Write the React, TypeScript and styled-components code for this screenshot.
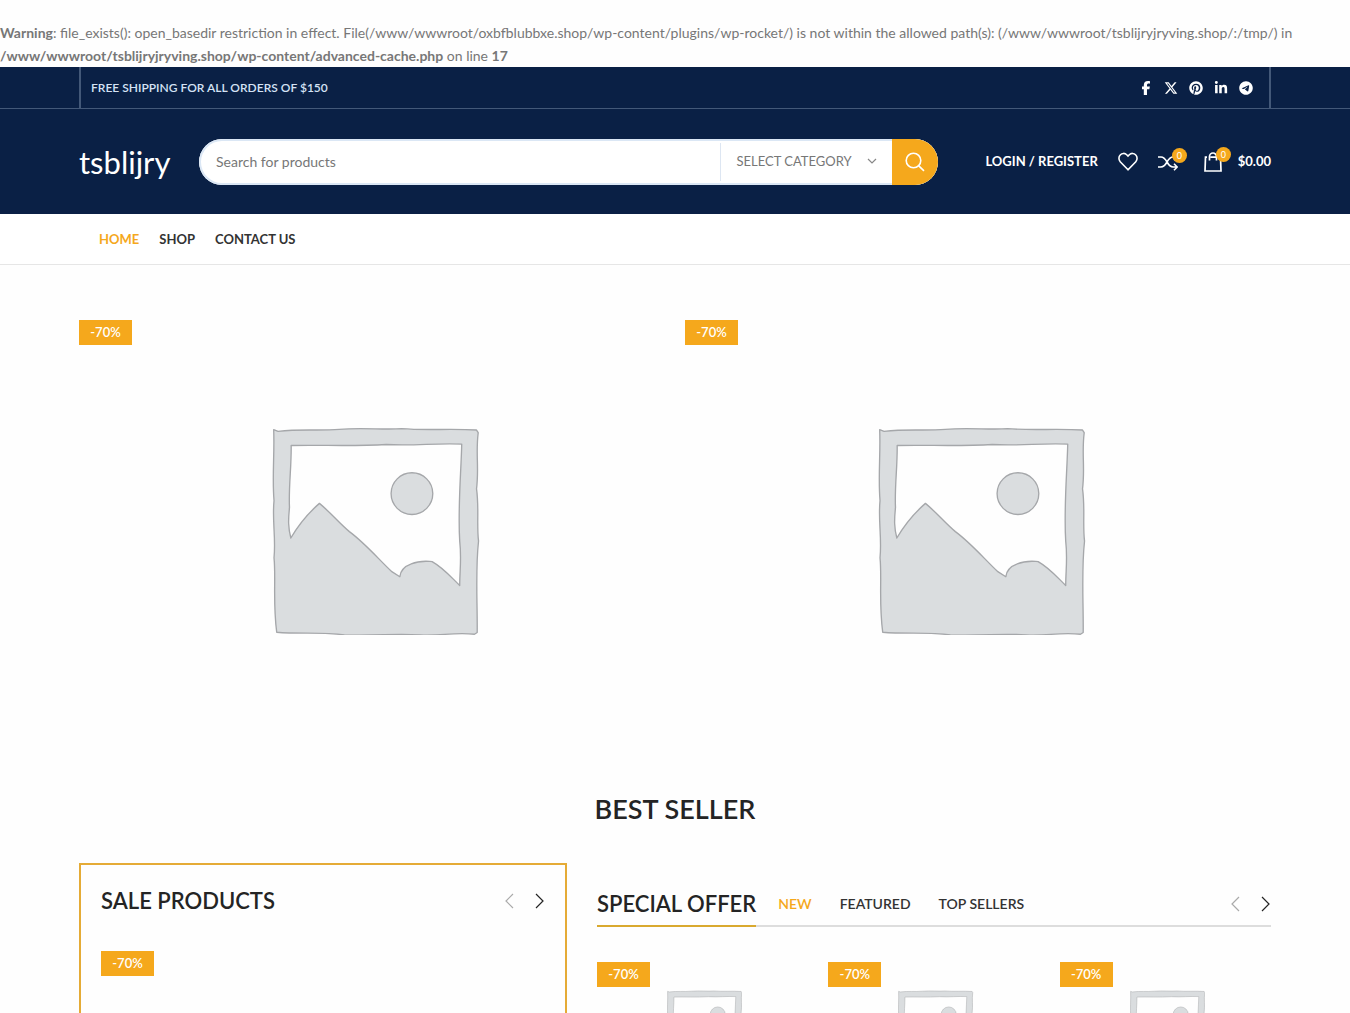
import React from "react";
import styled, { createGlobalStyle } from "styled-components";
import { FaFacebookF, FaLinkedinIn, FaPinterest, FaTelegram, FaXTwitter } from "react-icons/fa6";

const accent = "#f5a81c";
const navy = "#0a2045";
const rule = "#435878";
const ink = "#242424";

const GlobalStyle = createGlobalStyle`
  *, *::before, *::after { box-sizing: border-box; }
  html { scrollbar-width: none; }
  body {
    margin: 0;
    background: #fefefe;
    color: #777;
    font-family: Lato, "Liberation Sans", sans-serif;
    font-size: 14px;
    line-height: 23px;
  }
  a { color: inherit; text-decoration: none; }
  button, input, select { font: inherit; border: 0; margin: 0; }
  h2, h3, p, ul { margin: 0; padding: 0; }
  ul { list-style: none; }
`;

const Container = styled.div`
  max-width: 1222px;
  margin: 0 auto;
  padding: 0 15px;
`;

const Warning = styled.p`
  padding-top: 21px;
  b { font-weight: 700; }
`;

const Header = styled.header`
  background: ${navy};
  color: #fff;
`;

const TopBar = styled.div`
  border-bottom: 1px solid ${rule};
`;

const TopBarInner = styled.div`
  display: flex;
  align-items: center;
  justify-content: space-between;
  height: 41px;
  padding: 0 16px 0 10px;
  border: solid ${rule};
  border-width: 0 2px;
  font-size: 12px;
  font-weight: 600;
  color: #d5e3f5;
`;

const Socials = styled.ul`
  display: flex;
  gap: 11px;
  color: #fff;
  a { display: flex; }
`;

const MainBar = styled.div`
  display: flex;
  align-items: center;
  height: 105px;
`;

const SiteTitle = styled.a`
  width: 120px;
  font-size: 31px;
  line-height: 40px;
`;

const SearchForm = styled.form`
  display: flex;
  flex: 1;
  height: 46px;
  border-radius: 23px;
  overflow: hidden;
  background: #fff;
  box-shadow: inset 0 0 0 2px #dbe7f5;
`;

const SearchInput = styled.input`
  flex: 1;
  min-width: 0;
  padding: 0 17px;
  background: transparent;
  color: #777;
  outline: none;
  &::placeholder { color: #777; opacity: 1; }
`;

const CategoryBox = styled.div`
  display: flex;
  align-items: center;
  width: 172px;
  margin: 4px 0;
  padding-right: 15px;
  border-left: 1px solid #dde6f2;
`;

const CategorySelect = styled.select`
  flex: 1;
  min-width: 0;
  padding: 0 0 0 15px;
  appearance: none;
  background: transparent;
  color: #777;
  font-size: 13px;
  outline: none;
`;

const SearchButton = styled.button`
  display: grid;
  place-items: center;
  width: 46px;
  padding: 0;
  background: ${accent};
  color: #fff;
`;

const Tools = styled.div`
  display: flex;
  align-items: center;
  gap: 20px;
  margin-left: 47px;
  font-size: 13px;
  font-weight: 700;
`;

const ToolLink = styled.a`
  display: flex;
  align-items: center;
  gap: 16px;
`;

const CartLink = styled(ToolLink)`
  padding-left: 6px;
`;

const IconBox = styled.span`
  position: relative;
  display: flex;
`;

const Count = styled.span`
  position: absolute;
  top: -5px;
  right: -9px;
  width: 15px;
  height: 15px;
  border-radius: 50%;
  background: ${accent};
  color: #fff;
  font-size: 9px;
  font-weight: 400;
  line-height: 15px;
  text-align: center;
`;

const NavBar = styled.nav`
  background: #fff;
  border-bottom: 1px solid #e6e6e6;
`;

const NavList = styled.ul`
  display: flex;
  gap: 20px;
  height: 50px;
  align-items: center;
  padding-left: 20px;
  font-size: 13px;
  font-weight: 700;
  color: #333;
`;

const NavLink = styled.a<{ $active?: boolean }>`
  color: ${(p) => (p.$active ? accent : "inherit")};
`;

const FeaturedRow = styled.div`
  display: grid;
  grid-template-columns: 1fr 1fr;
  gap: 12px;
  margin: 55px -8px 0 0;
`;

const Card = styled.a`
  position: relative;
  display: block;
`;

const Label = styled.span`
  position: absolute;
  top: 0;
  left: 0;
  width: 53px;
  background: ${accent};
  color: #fff;
  font-size: 13px;
  font-weight: 600;
  line-height: 25px;
  text-align: center;
`;

const Media = styled.span<{ $ratio: string }>`
  display: grid;
  place-items: center;
  aspect-ratio: ${(p) => p.$ratio};
  svg { width: 35%; }
`;

const SectionTitle = styled.h2`
  margin: 47px 0 34px;
  color: ${ink};
  font-size: 27px;
  font-weight: 600;
  line-height: 40px;
  text-align: center;
`;

const Columns = styled.div`
  display: grid;
  grid-template-columns: 488fr 674fr;
  gap: 30px;
`;

const SalePanel = styled.section`
  padding: 20px;
  border: 2px solid #e5ab36;
`;

const PanelHead = styled.div`
  display: flex;
  align-items: center;
  justify-content: space-between;
  margin-bottom: 34px;
`;

const PanelTitle = styled.h3`
  color: ${ink};
  font-size: 22px;
  font-weight: 600;
  line-height: 32px;
`;

const Arrows = styled.div`
  display: flex;
  gap: 18px;
`;

const ArrowButton = styled.button`
  display: flex;
  padding: 0;
  background: none;
  color: ${ink};
  &:disabled { color: #aaa; }
`;

const OfferPanel = styled.section`
  padding-top: 20px;
`;

const OfferHead = styled.div`
  display: flex;
  align-items: center;
  height: 44px;
  margin-bottom: 35px;
  border-bottom: 2px solid #ddd;
`;

const OfferTitle = styled(PanelTitle)`
  height: 44px;
  margin: 0 22px -2px 0;
  border-bottom: 2px solid #d9a92f;
  line-height: 42px;
`;

const Tabs = styled.div`
  display: flex;
  flex: 1;
  gap: 28px;
`;

const Tab = styled.button<{ $active?: boolean }>`
  padding: 0;
  background: none;
  color: ${(p) => (p.$active ? accent : "#333")};
  font-weight: 600;
`;

const OfferRow = styled.div`
  display: grid;
  grid-template-columns: repeat(3, 1fr);
  gap: 16px;
  margin-right: -4px;
`;

function Placeholder() {
  return (
    <svg viewBox="70 48 618 622" aria-hidden="true" stroke="#a5a7aa" strokeWidth="4" strokeLinejoin="round">
      <path
        fill="#dadddf"
        fillRule="evenodd"
        d="M75 59 88 64C160 56 205 63 270 58 340 52 400 60 455 56 530 62 600 55 678 60L683 68C675 130 686 170 678 235 686 290 678 345 684 390 674 480 681 570 680 662L672 667C610 660 570 673 510 669 430 664 390 672 285 669 220 660 150 667 84 661 72 570 82 500 76 440 82 380 70 330 76 270 70 200 78 130 75 59ZM127 106C128 170 119 230 122 290 118 330 118 350 126 381 150 340 180 305 211 278 245 306 270 337 300 362 345 395 385 442 425 480L450 496C452 478 465 465 484 458 510 447 528 450 546 451 580 470 604 499 628 522 628 480 634 440 628 390 622 290 632 190 634 102 560 98 490 108 410 103 310 109 220 104 127 106Z"
      />
      <circle fill="#dadddf" cx="486" cy="249" r="62" />
    </svg>
  );
}

function ProductCard({ ratio }: { ratio: string }) {
  return (
    <Card href="#product" aria-label="Product, 70% off">
      <Media $ratio={ratio}>
        <Placeholder />
      </Media>
      <Label>-70%</Label>
    </Card>
  );
}

function Slider() {
  return (
    <Arrows>
      <ArrowButton disabled aria-label="Previous">
        <svg width="12" height="16" viewBox="0 0 12 16" fill="none" stroke="currentColor" strokeWidth="1.2">
          <path d="M10 1 3 8l7 7" />
        </svg>
      </ArrowButton>
      <ArrowButton aria-label="Next">
        <svg width="12" height="16" viewBox="0 0 12 16" fill="none" stroke="currentColor" strokeWidth="1.2">
          <path d="m3 1 7 7-7 7" />
        </svg>
      </ArrowButton>
    </Arrows>
  );
}

const socials = [
  { name: "Facebook", Icon: FaFacebookF },
  { name: "X", Icon: FaXTwitter },
  { name: "Pinterest", Icon: FaPinterest },
  { name: "Linkedin", Icon: FaLinkedinIn },
  { name: "Telegram", Icon: FaTelegram },
];

export default function App() {
  return (
    <>
      <GlobalStyle />
      <Warning>
        <b>Warning</b>: file_exists(): open_basedir restriction in effect.
        File(/www/wwwroot/oxbfblubbxe.shop/wp-content/plugins/wp-rocket/) is not within the allowed path(s):
        (/www/wwwroot/tsblijryjryving.shop/:/tmp/) in{" "}
        <b>/www/wwwroot/tsblijryjryving.shop/wp-content/advanced-cache.php</b> on line <b>17</b>
      </Warning>
      <Header>
        <TopBar>
          <Container>
            <TopBarInner>
              <span>FREE SHIPPING FOR ALL ORDERS OF $150</span>
              <Socials>
                {socials.map(({ name, Icon }) => (
                  <li key={name}>
                    <a href={`#${name.toLowerCase()}`} aria-label={name}>
                      <Icon size={14} />
                    </a>
                  </li>
                ))}
              </Socials>
            </TopBarInner>
          </Container>
        </TopBar>
        <Container>
          <MainBar>
            <SiteTitle href="#home">tsblijry</SiteTitle>
            <SearchForm onSubmit={(e) => e.preventDefault()}>
              <SearchInput type="text" placeholder="Search for products" aria-label="Search for products" />
              <CategoryBox>
                <CategorySelect aria-label="Category">
                  <option>SELECT CATEGORY</option>
                </CategorySelect>
                <svg width="10" height="8" viewBox="0 0 10 8" fill="none" stroke="#888" strokeWidth="1.2">
                  <path d="m1 1 4 4 4-4" />
                </svg>
              </CategoryBox>
              <SearchButton type="submit" aria-label="Search">
                <svg width="20" height="20" viewBox="0 0 20 20" fill="none" stroke="currentColor" strokeWidth="1.6">
                  <circle cx="8.5" cy="8.5" r="7.3" />
                  <path d="m13.8 13.8 5.2 5" />
                </svg>
              </SearchButton>
            </SearchForm>
            <Tools>
              <ToolLink href="#login">LOGIN / REGISTER</ToolLink>
              <ToolLink href="#wishlist" aria-label="Wishlist">
                <svg width="20" height="19" viewBox="0 0 20 19" fill="none" stroke="currentColor" strokeWidth="1.6">
                  <path d="M10 17.8 2.2 9.7C.5 7.9.5 4.8 2.2 3 4 1 6.9.9 8.7 2.7L10 4l1.3-1.3C13.1.9 16 1 17.8 3c1.7 1.8 1.7 4.9 0 6.7Z" />
                </svg>
              </ToolLink>
              <ToolLink href="#compare" aria-label="Compare">
                <IconBox>
                  <svg width="20" height="18" viewBox="0 0 20 18" fill="none" stroke="currentColor" strokeWidth="1.6">
                    <path d="M0 4h3c2.5 0 4 1.5 6 5s3.5 5 6 5h4M0 14h3c2.5 0 4-1.500 6-5s3.5-5 6-5h4M16 .8 19.2 4 16 7.2M16 10.8l3.2 3.2-3.2 3.2" />
                  </svg>
                  <Count>0</Count>
                </IconBox>
              </ToolLink>
              <CartLink href="#cart">
                <IconBox>
                  <svg width="18" height="20" viewBox="0 0 18 20" fill="none" stroke="currentColor" strokeWidth="1.7">
                    <path d="M3 5.200H1.500L1 19h16L16.500 5.200H15M6.500 5.200H13M5.500 8.500V4.500a3.500 3.500 0 0 1 7 0v4" />
                  </svg>
                  <Count>0</Count>
                </IconBox>
                $0.00
              </CartLink>
            </Tools>
          </MainBar>
        </Container>
      </Header>
      <NavBar>
        <Container>
          <NavList>
            <li><NavLink $active href="#home">HOME</NavLink></li>
            <li><NavLink href="#shop">SHOP</NavLink></li>
            <li><NavLink href="#contact">CONTACT US</NavLink></li>
          </NavList>
        </Container>
      </NavBar>
      <main>
        <Container>
          <FeaturedRow>
            <ProductCard ratio="600 / 426" />
            <ProductCard ratio="600 / 426" />
          </FeaturedRow>
          <SectionTitle>BEST SELLER</SectionTitle>
          <Columns>
            <SalePanel>
              <PanelHead>
                <PanelTitle>SALE PRODUCTS</PanelTitle>
                <Slider />
              </PanelHead>
              <ProductCard ratio="1 / 1" />
            </SalePanel>
            <OfferPanel>
              <OfferHead>
                <OfferTitle>SPECIAL OFFER</OfferTitle>
                <Tabs>
                  <Tab $active>NEW</Tab>
                  <Tab>FEATURED</Tab>
                  <Tab>TOP SELLERS</Tab>
                </Tabs>
                <Slider />
              </OfferHead>
              <OfferRow>
                <ProductCard ratio="215 / 133" />
                <ProductCard ratio="215 / 133" />
                <ProductCard ratio="215 / 133" />
              </OfferRow>
            </OfferPanel>
          </Columns>
        </Container>
      </main>
    </>
  );
}
